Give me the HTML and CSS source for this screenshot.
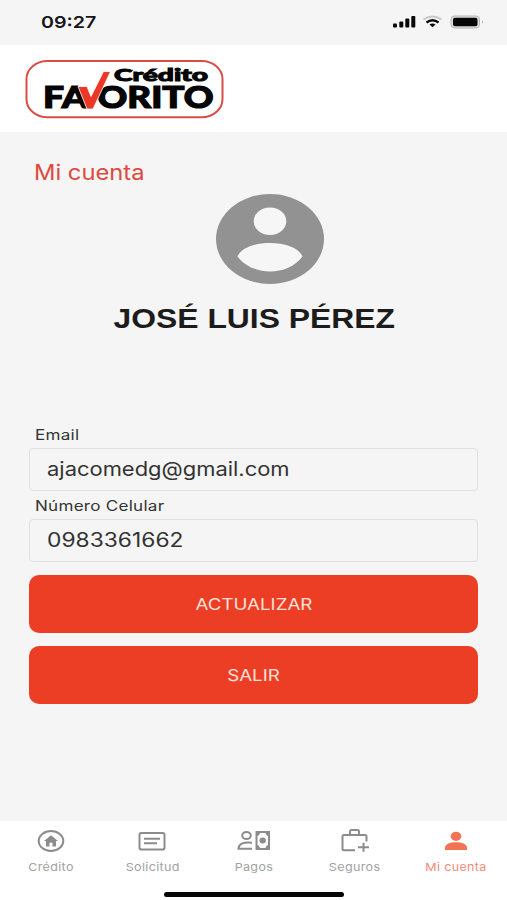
FILE: index.html
```html
<!DOCTYPE html>
<html lang="es">
<head>
<meta charset="utf-8">
<title>Mi cuenta</title>
<link rel="stylesheet" href="styles.css">
</head>
<body>
<div class="app">
  <header class="status">
    <span class="wide time">09:27</span>
    <svg class="signals" width="92" height="16" viewBox="0 0 92 16">
      <g fill="#080808"><rect x="1" y="9.5" width="4" height="4" rx="1"/><rect x="7.3" y="7.5" width="4" height="6" rx="1"/><rect x="13.3" y="4.5" width="4" height="9" rx="1"/><rect x="19.3" y="2" width="4" height="11.5" rx="1"/></g>
      <g fill="none" stroke-width="2"><path d="M31.5 5.5Q40.500-.5 49.500 5.500" stroke="#c9c9c9"/><path d="M34.500 8.500Q40.500 4 46.500 8.500" stroke="#080808" stroke-width="2.300"/></g>
      <path d="M37.500 10.500Q40.500 8.500 43.500 10.500L40.500 13.300Z" fill="#080808"/>
      <rect x="59" y="2" width="28.500" height="12" rx="3.500" fill="#dedede" stroke="#b5b5b5"/>
      <rect x="61" y="3.700" width="24.500" height="8.600" rx="2" fill="#050505"/>
      <path d="M90 6.500q2 1.500 0 3z" fill="#aaa"/>
    </svg>
  </header>
  <div class="brand">
    <svg width="200" height="62" viewBox="0 0 200 62" role="img" aria-label="Crédito Favorito">
      <rect x="2.500" y="2" width="196" height="56.300" rx="21" ry="18" fill="#fff" stroke="#d84d47" stroke-width="2"/>
      <g class="logo-text">
        <text x="90" y="22" font-size="17.500" stroke-width="1" textLength="94" lengthAdjust="spacingAndGlyphs">Crédito</text>
        <text x="19" y="49" font-size="30" stroke-width="1.200" textLength="45" lengthAdjust="spacingAndGlyphs">FA</text>
        <text x="73.500" y="49" font-size="30" stroke-width="1.200" textLength="116" lengthAdjust="spacingAndGlyphs">ORITO</text>
      </g>
      <path d="M54 27.500h9l4 10L79.500 12.500h7L69 50h-6z" fill="#eb3726" stroke="#fff" stroke-width=".8"/>
    </svg>
  </div>
  <main class="content">
    <h1 class="title"><span class="wide">Mi cuenta</span></h1>
    <svg class="avatar" width="108" height="90" viewBox="0 0 108 90">
      <ellipse cx="54" cy="45" rx="54" ry="45" fill="#929292"/>
      <ellipse cx="54" cy="27.300" rx="16.300" ry="13.700" fill="#f6f6f6"/>
      <path d="M21.500 62.500C29 44.500 79 44.500 86.500 62.500C71.500 82.500 36.500 82.500 21.500 62.500Z" fill="#f6f6f6"/>
    </svg>
    <h2 class="name"><span class="wide">JOSÉ LUIS PÉREZ</span></h2>
    <form class="form">
      <label class="label" for="email"><span class="wide">Email</span></label>
      <div class="field email" id="email"><span class="wide">ajacomedg@gmail.com</span></div>
      <label class="label" for="phone"><span class="wide">Número Celular</span></label>
      <div class="field" id="phone"><span class="wide">0983361662</span></div>
      <button class="button" type="button"><span class="wide">ACTUALIZAR</span></button>
      <button class="button" type="button"><span class="wide">SALIR</span></button>
    </form>
  </main>
  <nav class="tabs">
    <a class="tab">
      <svg width="36" height="26" viewBox="0 0 36 26"><ellipse cx="18" cy="13" rx="12.300" ry="10" fill="none" stroke="#8c8c8c" stroke-width="2"/><path d="M18 7.300l7 5.700h-2v5.500h-3.500v-3.700h-3v3.700H13V13h-2z" fill="#8c8c8c"/></svg>
      <span class="wide">Crédito</span>
    </a>
    <a class="tab">
      <svg width="36" height="26" viewBox="0 0 36 26" fill="none" stroke="#8c8c8c" stroke-width="2"><rect x="5.500" y="5" width="25" height="16.500" rx="1.800"/><path d="M10 10.800h16M10 15.300h13"/></svg>
      <span class="wide">Solicitud</span>
    </a>
    <a class="tab">
      <svg width="36" height="26" viewBox="0 0 36 26"><g fill="none" stroke="#8c8c8c" stroke-width="2"><ellipse cx="11.500" cy="7.500" rx="4.300" ry="3.500"/><path d="M17 14.800Q3.500 13.500 3.500 20.800H17"/></g><path d="M20.500 3H35v19H20.500z" fill="#8c8c8c"/><path d="M25 5h5.500q.5 2.500 2.500 3v9q-2 .5-2.500 3H25q-.5-2.500-2.500-3V8q2-.5 2.500-3z" fill="#fff"/><ellipse cx="27.700" cy="12.500" rx="3.200" ry="3" fill="#8c8c8c"/></svg>
      <span class="wide">Pagos</span>
    </a>
    <a class="tab">
      <svg width="36" height="26" viewBox="0 0 36 26" fill="none" stroke="#8c8c8c" stroke-width="2"><path d="M18 22.300H7q-1.500 0-1.500-1.500V8.500Q5.500 7 7 7H28q1.500 0 1.500 1.500v5M13 7V3.500Q13 2 14.500 2h6Q22 2 22 3.500V7M26.500 14.800v9M21 19.300h11"/></svg>
      <span class="wide">Seguros</span>
    </a>
    <a class="tab active">
      <svg width="36" height="26" viewBox="0 0 36 26" fill="#f27354"><ellipse cx="18" cy="8.300" rx="5.300" ry="4.600"/><path d="M7 22V19.800C7 12.500 29 12.500 29 19.800V22z"/></svg>
      <span class="wide">Mi cuenta</span>
    </a>
  </nav>
  <div class="home"></div>
</div>
</body>
</html>
```
FILE: styles.css
```css
* { box-sizing: border-box; }
body { margin: 0; background: #f5f5f5; font-family: Inter, "Liberation Sans", sans-serif; }
.app { width: 507px; height: 900px; display: flex; flex-direction: column; background: #f5f5f5; overflow: hidden; }
.wide { display: inline-block; transform: scaleX(1.19); transform-origin: center; white-space: nowrap; }
.status { height: 45px; display: flex; justify-content: space-between; align-items: flex-start; padding: 12px 23px 0 41px; }
.time { font-size: 16.500px; line-height: 20px; font-weight: 600; color: #151515; transform-origin: left; }
.signals { margin-top: 2px; }
.brand { height: 87px; padding: 14px 24px; background: #fff; }
.brand svg { display: block; }
.logo-text { font-family: Lato, Inter, sans-serif; font-weight: 900; fill: #050505; stroke: #050505; }
.content { flex: 1; display: flex; flex-direction: column; padding: 0 29px; }
.title { margin: 28px 0 0 5px; font-size: 21px; line-height: 26px; font-weight: 400; color: #dc4a40; }
.title .wide, .label .wide, .field .wide { transform-origin: left; }
.title .wide { transform: scaleX(1.13); }
.avatar { display: block; margin: 8px 0 0 187px; }
.name { margin: 19px 0 0; width: 450px; text-align: center; font-family: "Liberation Sans", sans-serif; font-size: 27px; line-height: 32px; color: #1c1c1c; }
.name .wide { transform: scaleX(1.18); }
.form { margin-top: 90.500px; display: flex; flex-direction: column; }
.label { height: 22px; padding-left: 6px; font-size: 14px; line-height: 17px; letter-spacing: .2px; color: #333; }
.label .wide { transform: scaleX(1.220); }
.field { height: 43px; margin-bottom: 6px; padding-left: 17px; border: 1px solid #e0e0e0; border-radius: 4px; font-size: 19.500px; line-height: 41px; color: #333; }
.field .wide { transform: scaleX(1.17); }
.email .wide { transform: scaleX(1.125); }
.button { height: 58px; margin: 7px 0 6px; padding: 0; border: 0; border-radius: 10px; background: #eb3e25; color: #ffe1da; font: 400 16px/58px Inter, sans-serif; }
.button .wide { transform: scaleX(1.17); }
.tabs { height: 79px; display: grid; grid-template-columns: repeat(5, 101.200px); background: #fff; padding: 7px 0 0 .5px; }
.tab { display: flex; flex-direction: column; align-items: center; font-size: 11px; line-height: 15px; letter-spacing: .3px; color: #a2a2a2; }
.tab .wide { margin-top: 6px; transform: scaleX(1.14); }
.tab.active { color: #f08c78; }
.home { width: 180px; height: 5px; margin: -8px 0 3px 164px; border-radius: 3px; background: #050505; }
```
